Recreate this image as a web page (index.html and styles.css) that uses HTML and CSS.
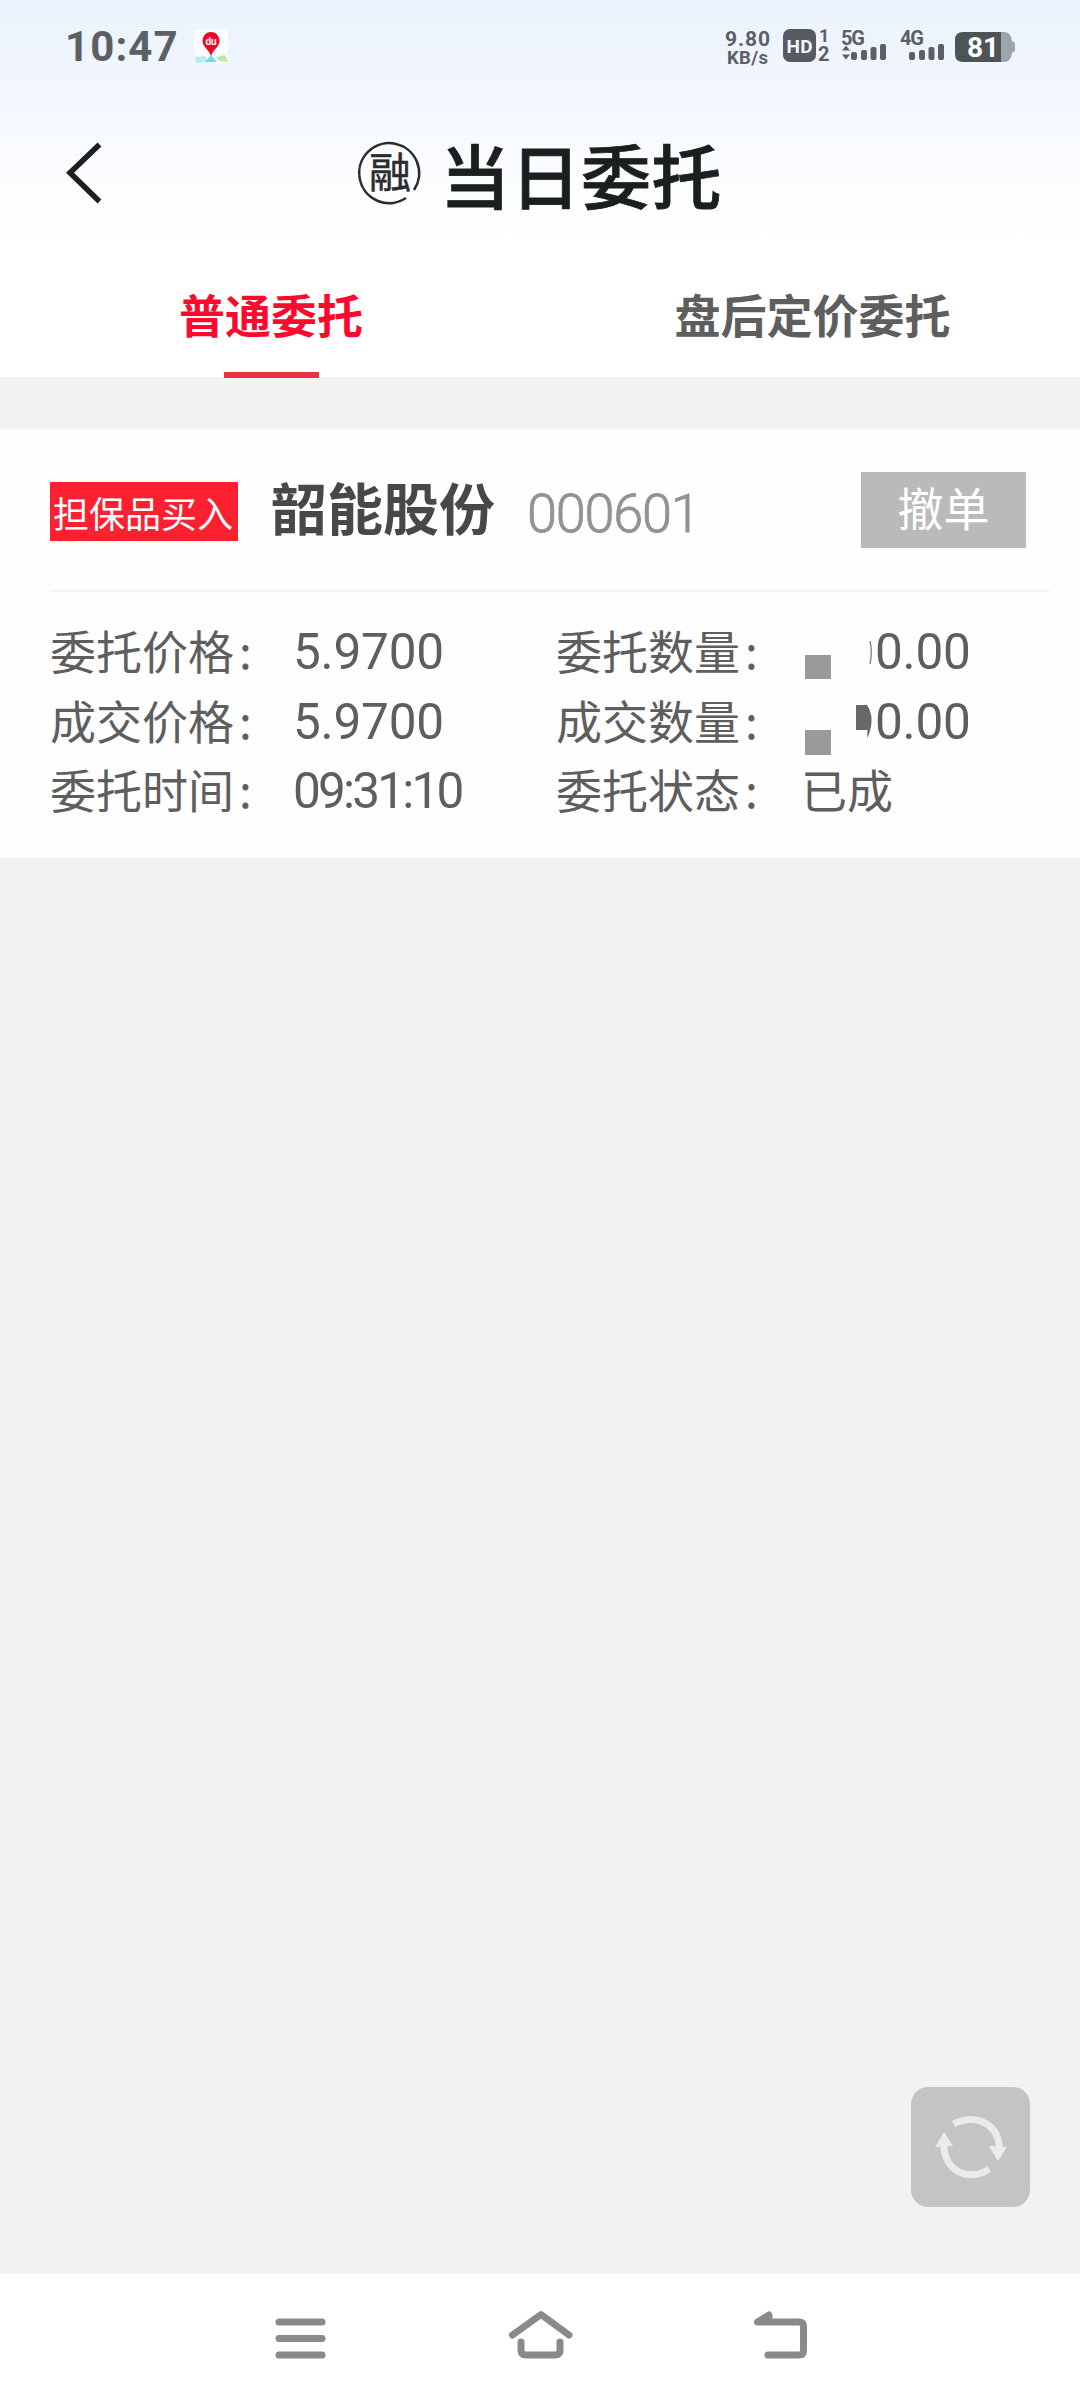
FILE: index.html
```html
<!DOCTYPE html>
<html lang="zh-CN">
<head>
<meta charset="utf-8">
<title>当日委托</title>
<link rel="stylesheet" href="styles.css">
</head>
<body>
<div class="page">
  <header class="top">
    <div class="status">
      <span class="clock">10:47</span>
      <svg class="pin" width="34" height="34" viewBox="0 0 34 34">
        <rect width="34" height="34" rx="3" fill="#fafcff"/>
        <path d="M1 28l10-1 4 6-13 1z" fill="#b5ebf2"/>
        <path d="M17 26l6 7H11z" fill="#79d4ec"/>
        <path d="M22 28l9-2 3 7-9-1z" fill="#b9eba2"/>
        <path d="M17 27C14.500 20 8.500 18 8.500 11.500a8.500 8.500 0 0 1 17 0C25.500 18 19.500 20 17 27z" fill="#ee0a24"/>
        <text x="17" y="16" text-anchor="middle" class="pin-text">du</text>
      </svg>
      <svg class="indicators" width="300" height="44" viewBox="720 24 300 44">
        <g class="ind-text">
          <text x="725" y="46" font-size="21" textLength="45">9.80</text>
          <text x="727" y="64" font-size="18.500" textLength="41">KB/s</text>
          <text x="819" y="42" font-size="18">1</text>
          <text x="818" y="61" font-size="20">2</text>
          <text x="841" y="45" font-size="20" textLength="24">5G</text>
          <text x="900" y="45" font-size="20" textLength="24">4G</text>
        </g>
        <rect x="783" y="29" width="33" height="33" rx="7" fill="#555b60"/>
        <text x="799.500" y="52.500" text-anchor="middle" class="hd" textLength="26">HD</text>
        <g fill="#5b6065">
          <path d="M842 50.500l4-5 4 5zM842 54.500l4 5 4-5z"/>
          <rect x="851" y="52" width="6" height="8" rx="2"/><rect x="861" y="50" width="6" height="10" rx="2"/><rect x="870.500" y="47" width="6" height="13" rx="2"/><rect x="880" y="44" width="6" height="16" rx="2"/>
          <rect x="909" y="52" width="6" height="8" rx="2"/><rect x="919" y="50" width="6" height="10" rx="2"/><rect x="928.500" y="47" width="6" height="13" rx="2"/><rect x="938" y="44" width="6" height="16" rx="2"/>
        </g>
        <path d="M1000 32h4q7 0 8 9l3 2v8l-3 2q-1 9-8 9h-4z" fill="#9da4aa"/>
        <path d="M963 32h38v30h-38q-8 0-8-8V40q0-8 8-8z" fill="#4d5457"/>
        <text x="983" y="57" text-anchor="middle" class="charge">81</text>
      </svg>
    </div>
    <div class="titlebar">
      <svg class="back" width="40" height="66" viewBox="64 140 40 66"><path d="M99.500 144.500L70 172.800l29.500 28.700" fill="none" stroke="#1b201f" stroke-width="5.500"/></svg>
      <svg class="seal" width="64" height="64" viewBox="357 141 64 64">
        <path d="M414 190A30 30 0 1 0 406 198" fill="none" stroke="#2a2c2e" stroke-width="2.600"/>
        <text x="390" y="188" text-anchor="middle" class="seal-text">融</text>
      </svg>
      <h1>当日委托</h1>
    </div>
    <nav class="tabs">
      <div class="tab active">普通委托</div>
      <div class="tab">盘后定价委托</div>
    </nav>
  </header>
  <main class="content">
    <section class="card">
      <div class="card-head">
        <span class="tag">担保品买入</span>
        <span class="name">韶能股份</span>
        <span class="code">000601</span>
        <button class="cancel">撤单</button>
      </div>
      <div class="grid">
        <span class="label">委托价格<b>:</b></span><span class="num">5.9700</span>
        <span class="label">委托数量<b>:</b></span><span class="num masked">0.00
          <svg class="mask" width="80" height="56" viewBox="800 623 80 56"><path d="M805 655h26v24h-26z" fill="#9a9a9a"/><path d="M870 641q2.500 11 0 23" fill="none" stroke="#777" stroke-width="1.300"/></svg></span>
        <span class="label">成交价格<b>:</b></span><span class="num">5.9700</span>
        <span class="label">成交数量<b>:</b></span><span class="num masked">0.00
          <svg class="mask" width="80" height="66" viewBox="800 693 80 66"><path d="M805 730h26v25h-26z" fill="#9a9a9a"/><path d="M856 705h11q8 12 2 29l-2 4 .500-8H856z" fill="#686868"/></svg></span>
        <span class="label">委托时间<b>:</b></span><span class="num time">09:31:10</span>
        <span class="label">委托状态<b>:</b></span><span class="state">已成</span>
      </div>
    </section>
    <button class="refresh" aria-label="刷新">
      <svg width="120" height="120" viewBox="0 0 120 120">
        <g fill="none" stroke="#ebebeb" stroke-width="7"><path d="M42.500 37C60 27 88 33 88.500 63"/><path d="M78 82C60 95 32 86 33 56"/></g>
        <path d="M78 59l18 1-9 14zM24 60l9-15 9 14z" fill="#ebebeb"/>
      </svg>
    </button>
  </main>
  <footer class="sysnav">
    <svg width="540" height="60" viewBox="270 2308 540 60" fill="none" stroke="#8a8a8a" stroke-width="7" stroke-linecap="round" stroke-linejoin="round">
      <path d="M279 2322h43M279 2338.500h43M279 2355h43"/>
      <path d="M512.500 2335L541 2314.500l28 20.500M521 2342v8q0 5 5 5h29q5 0 5-5v-8"/>
      <path d="M768 2355h31q4.500 0 4.500-4.500v-24q0-4.500-4.500-4.500H757.500L769 2315v5"/>
    </svg>
  </footer>
</div>
</body>
</html>
```
FILE: styles.css
```css
* { box-sizing: border-box; }
body { margin: 0; font-family: "Noto Sans CJK SC", sans-serif; color: #5e5e5e; }
button { border: 0; padding: 0; font-family: inherit; }
svg { display: block; flex: none; }
.page { width: 1080px; height: 2400px; display: flex; flex-direction: column; background: #f2f2f2; }
.top { height: 377px; background: linear-gradient(#ebf3fe 0, #f2f6fe 90px, #fafcff 160px, #fff 250px); display: flex; flex-direction: column; }
.status { height: 92px; padding: 24px 60px 24px 65px; display: flex; align-items: center; }
.clock { width: 129px; padding-top: 1px; font: 700 42px/44px Roboto, sans-serif; color: #5b6065; letter-spacing: 1.1px; }
.indicators { margin-left: auto; }
.pin-text { font: 700 10px Roboto, sans-serif; fill: #fff; }
.ind-text { font-family: Roboto, sans-serif; font-weight: 700; fill: #5b6065; }
.hd { font: 700 19px Roboto, sans-serif; fill: #f4f7fc; }
.charge { font: 700 28px Roboto, sans-serif; fill: #fff; }
.titlebar { height: 162px; padding-left: 64px; display: flex; align-items: center; }
.seal { margin-left: 253px; overflow: visible; }
.seal-text { font: 400 42px "Noto Sans CJK SC", sans-serif; fill: #2a2c2e; stroke: #2a2c2e; stroke-width: .5px; }
h1 { margin: 2px 0 0 19px; font-size: 70px; line-height: 80px; font-weight: 500; color: #1b201f; letter-spacing: .5px; -webkit-text-stroke: .8px #1b201f; }
.tabs { height: 123px; display: grid; grid-template-columns: 542px 1fr; }
.tab { height: 124px; display: flex; flex-direction: column; align-items: center; padding-top: 29px; font-size: 46px; line-height: 60px; font-weight: 700; }
.tab:last-child { padding-left: 3px; }
.active { color: #fb0a2e; }
.active::after { content: ""; width: 95px; height: 6px; margin-top: 29px; background: #e93345; }
.content { flex: 1; padding-top: 52px; position: relative; }
.card { height: 429px; background: #fefefe; }
.card-head { height: 163px; margin: 0 30px 0 50px; border-bottom: 2px solid #f5f5f5; display: flex; align-items: flex-start; }
.tag { width: 188px; height: 59px; margin-top: 53px; padding: 3px 0 0 3px; background: #fc2030; color: #fff; font-size: 36px; line-height: 55px; white-space: nowrap; }
.name { margin: 42px 0 0 33px; font-size: 56px; line-height: 70px; font-weight: 700; color: #484848; }
.code { margin: 50px 0 0 32px; font: 300 54px/70px Roboto, sans-serif; color: #929292; letter-spacing: -1.2px; -webkit-text-stroke: .8px #929292; }
.cancel { width: 165px; height: 76px; margin: 43px 24px 0 auto; padding-bottom: 7px; background: #bababa; color: #fff; font-size: 46px; line-height: 69px; }
.grid { padding: 24px 0 0 50px; display: grid; grid-template-columns: 243px 263px 245px auto; grid-auto-rows: 69.6px; font-size: 46px; line-height: 66px; }
.label { display: flex; white-space: nowrap; }
.label b { font-weight: 400; padding-left: 5px; }
.num { font: 400 49.5px/73px Roboto, sans-serif; letter-spacing: -.2px; white-space: nowrap; }
.time { letter-spacing: -2.8px; }
.masked { position: relative; padding-left: 74px; }
.mask { position: absolute; left: -1px; top: 7px; }
.state { line-height: 66px; }
.refresh { position: absolute; left: 911px; bottom: 67px; width: 119px; height: 120px; border-radius: 17px; background: #c4c4c4; overflow: hidden; }
.sysnav { height: 126px; background: #fff; padding: 34px 0 0 270px; }
```
